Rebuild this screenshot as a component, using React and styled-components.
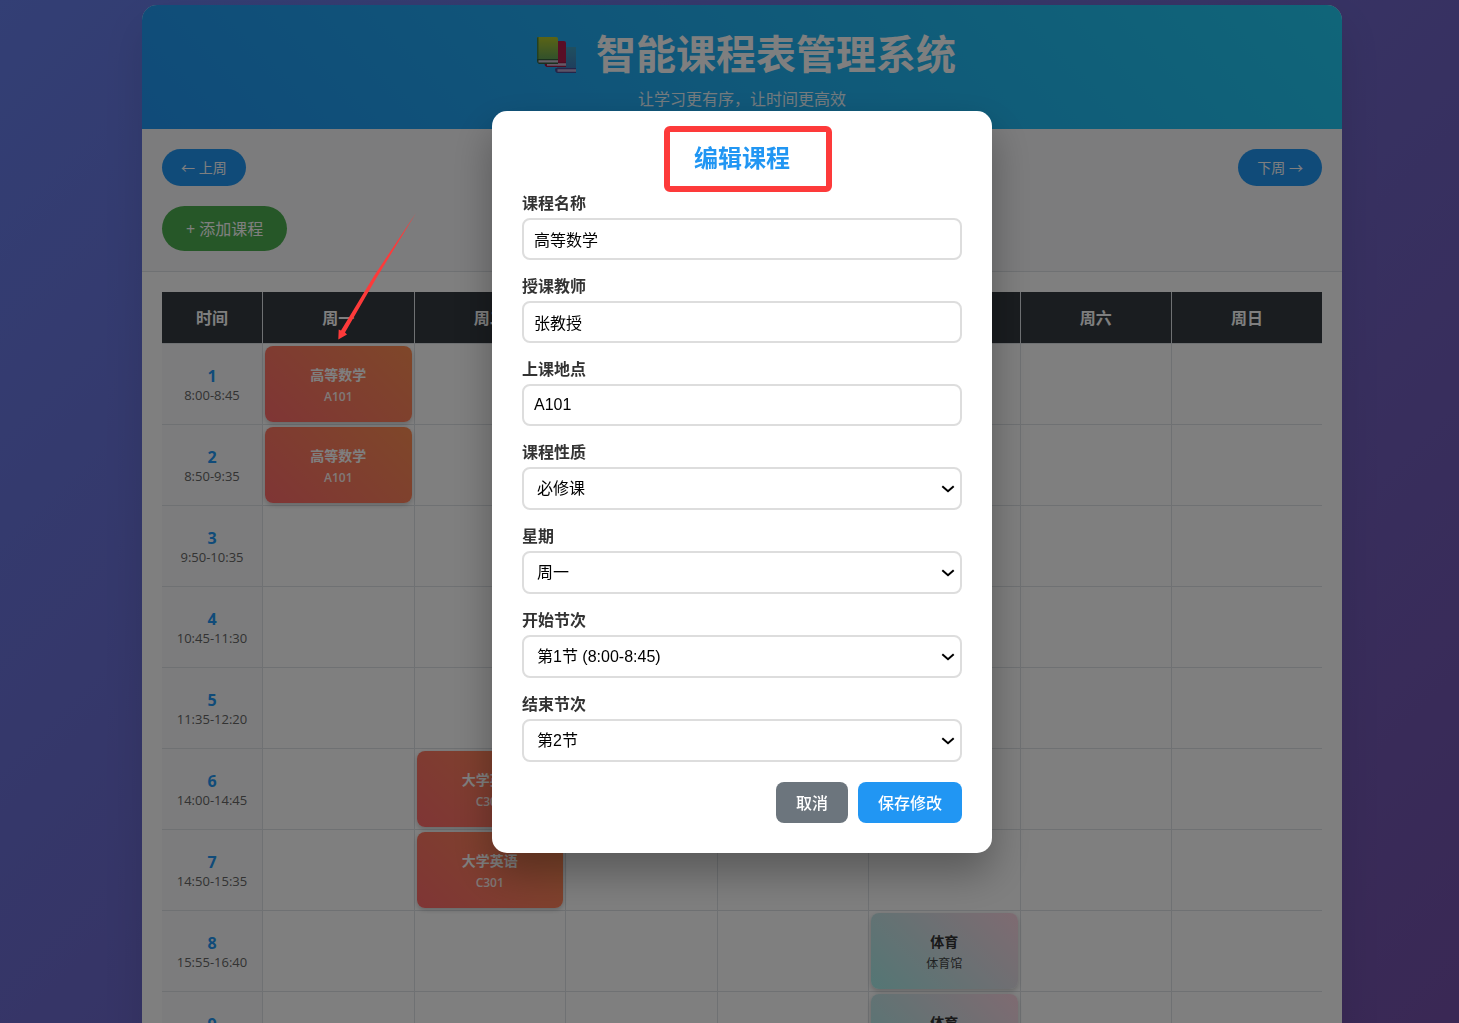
import React from 'react';
import styled, { createGlobalStyle } from 'styled-components';

const GlobalStyle = createGlobalStyle`
  * {
    box-sizing: border-box;
    margin: 0;
    padding: 0;
  }

  body {
    font-family: "Open Sans", "Noto Sans CJK SC", sans-serif;
    font-size: 16px;
    line-height: 23px;
    color: #333;
  }
`;

const Page = styled.div`
  height: 100vh;
  overflow: hidden;
  padding: 5px 0 0 25px;
  background: linear-gradient(135deg, #667eea 0%, #764ba2 100%) no-repeat;
  background-size: 100% 130vh;
`;

const Container = styled.div`
  max-width: 1200px;
  margin: 0 auto;
  background: #fff;
  border-radius: 15px;
  box-shadow: 0 20px 40px rgba(0, 0, 0, 0.1);
  overflow: hidden;
`;

const Header = styled.header`
  padding: 20px 20px 18px;
  text-align: center;
  color: #fff;
  background: linear-gradient(45deg, #2196f3, #21cbf3);

  h1 {
    display: flex;
    justify-content: center;
    align-items: center;
    gap: 12px;
    margin-bottom: 6px;
    font-size: 40px;
    line-height: 57px;
  }

  p {
    opacity: 0.9;
  }
`;

const Controls = styled.div`
  padding: 20px;
  background: #f8f9fa;
  border-bottom: 1px solid #dee2e6;
`;

const WeekNav = styled.div`
  display: flex;
  justify-content: space-between;
  margin-bottom: 20px;
`;

const PillButton = styled.button`
  display: block;
  border: none;
  border-radius: 25px;
  padding: ${({ $large }) => ($large ? '12px 24px 10px' : '10px 19px')};
  font-family: inherit;
  font-size: ${({ $large }) => ($large ? '16px' : '14px')};
  line-height: ${({ $large }) => ($large ? '23px' : '17px')};
  color: #fff;
  background: ${({ $large }) => ($large ? '#4caf50' : '#2196f3')};
  cursor: pointer;
`;

const TableWrap = styled.div`
  padding: 20px;
`;

const Timetable = styled.table`
  width: 100%;
  table-layout: fixed;
  border-collapse: separate;
  border-spacing: 0;
  text-align: center;

  th,
  td {
    border-right: 1px solid #dee2e6;
    border-bottom: 1px solid #dee2e6;
  }

  th:last-child,
  td:last-child {
    border-right: none;
  }

  th {
    padding-top: 2px;
  }

  thead th {
    height: 52px;
    color: #fff;
    background: #343a40;
  }

  thead th:first-child {
    width: 101px;
  }

  thead th:last-child {
    width: 150px;
  }

  tbody th {
    font-weight: normal;
    background: #f8f9fa;
  }

  td {
    height: 81px;
    padding: 2px;
  }
`;

const Period = styled.div`
  font-weight: bold;
  line-height: 20px;
  color: #2196f3;
`;

const Time = styled.div`
  font-size: 13px;
  line-height: 18px;
  color: #666;
`;

const Course = styled.div`
  display: flex;
  flex-direction: column;
  justify-content: center;
  gap: 4px;
  height: 76px;
  padding-top: 3px;
  border-radius: 8px;
  color: ${({ $kind }) => ($kind === 'pe' ? '#333' : '#fff')};
  background: ${({ $kind }) =>
    $kind === 'pe'
      ? 'linear-gradient(45deg, #a8edea, #fed6e3)'
      : 'linear-gradient(45deg, #ff6b6b, #ff8e53)'};
  box-shadow: 0 2px 5px rgba(0, 0, 0, 0.2);
  cursor: pointer;

  strong {
    font-size: 14px;
    line-height: 19px;
  }

  span {
    font-size: 12px;
    font-weight: ${({ $kind }) => ($kind === 'pe' ? 'normal' : '600')};
    line-height: 18px;
    opacity: 0.9;
  }
`;

const Overlay = styled.div`
  position: fixed;
  inset: 0;
  display: flex;
  justify-content: center;
  align-items: center;
  padding: 0 0 59px 25px;
  background: rgba(0, 0, 0, 0.5);
`;

const Modal = styled.form`
  width: 500px;
  padding: 30px;
  border-radius: 15px;
  background: #fff;
  box-shadow: 0 20px 40px rgba(0, 0, 0, 0.3);
`;

const ModalTitle = styled.h3`
  position: relative;
  width: fit-content;
  margin: 0 auto 18px;
  font-size: 24px;
  line-height: 33px;
  color: #2196f3;
`;

const TitleMark = styled.span`
  position: absolute;
  top: -15px;
  left: -30px;
  width: 168px;
  height: 66px;
  border: 6px solid #fd3a3a;
  border-radius: 6px;
`;

const Field = styled.div`
  margin-bottom: 15px;

  label {
    display: block;
    margin-bottom: 3px;
    font-weight: bold;
  }

  input,
  select {
    display: block;
    width: 100%;
    height: 42px;
    padding: 10px;
    border: 2px solid #ddd;
    border-radius: 8px;
    font-family: "Liberation Sans", "Noto Sans CJK SC", sans-serif;
    font-size: 16px;
    color: #000;
    background: #fff;
  }

  select {
    height: 43px;
    padding: 0 30px 0 13px;
    appearance: none;
  }
`;

const SelectBox = styled.div`
  position: relative;

  svg {
    position: absolute;
    top: 18px;
    right: 7px;
    pointer-events: none;
  }
`;

const Actions = styled.div`
  display: flex;
  justify-content: flex-end;
  gap: 10px;
  margin-top: 20px;
`;

const ActionButton = styled.button`
  padding: 10px 20px 8px;
  border: none;
  border-radius: 8px;
  font-family: inherit;
  font-size: 16px;
  font-weight: 500;
  line-height: 23px;
  color: #fff;
  background: ${({ $primary }) => ($primary ? '#2196f3' : '#6c757d')};
  cursor: pointer;
`;

const Pointer = styled.svg`
  position: fixed;
  top: 210px;
  left: 330px;
`;

const days = ['周一', '周二', '周三', '周四', '周五', '周六', '周日'];

const periods = [
  '8:00-8:45',
  '8:50-9:35',
  '9:50-10:35',
  '10:45-11:30',
  '11:35-12:20',
  '14:00-14:45',
  '14:50-15:35',
  '15:55-16:40',
  '16:45-17:30',
];

const courses = [
  { name: '高等数学', room: 'A101', kind: 'required', day: 0, start: 0, end: 1 },
  { name: '大学英语', room: 'C301', kind: 'required', day: 1, start: 5, end: 6 },
  { name: '体育', room: '体育馆', kind: 'pe', day: 4, start: 7, end: 8 },
];

const fields = [
  { id: 'name', label: '课程名称', value: '高等数学' },
  { id: 'teacher', label: '授课教师', value: '张教授' },
  { id: 'room', label: '上课地点', value: 'A101' },
  { id: 'kind', label: '课程性质', options: ['必修课', '选修课'] },
  { id: 'day', label: '星期', options: days },
  { id: 'start', label: '开始节次', options: periods.map((time, i) => `第${i + 1}节 (${time})`) },
  { id: 'end', label: '结束节次', options: periods.slice(1).map((_, i) => `第${i + 2}节`) },
];

const findCourse = (day, period) =>
  courses.find((c) => c.day === day && period >= c.start && period <= c.end);

const Books = () => (
  <svg width="56" height="48" viewBox="0 0 56 48" aria-hidden="true">
    <defs>
      <linearGradient id="green" x1="0" y1="0" x2="0" y2="1">
        <stop offset="0" stopColor="#b5c82c" />
        <stop offset="1" stopColor="#5da05a" />
      </linearGradient>
      <linearGradient id="blue" x1="0" y1="0" x2="0" y2="1">
        <stop offset="0" stopColor="#3f9fc0" />
        <stop offset="1" stopColor="#3d78ba" />
      </linearGradient>
    </defs>
    <path d="M29 17h19v25H29z" fill="url(#blue)" />
    <path d="M29 39h19v3H29z" fill="#b9a9cf" />
    <path d="M28 38h20v1.2H29.5v2.6H48V43H29q-2-1-2-3t1-2z" fill="#4b4a92" />
    <path d="M18 11h18q2 0 2 2v23H18z" fill="#b51d4d" />
    <path d="M18 33h20v3H18z" fill="#ccb0ce" />
    <path d="M18 32h20v1.2H19v2.6h19V37H18.500q-2-1-2-3t1.500-2z" fill="#9c1947" />
    <path d="M10 7h18q2 0 2 2v22H9V8q0-1 1-1z" fill="url(#green)" />
    <path d="M9 8q0-1 1.500-1V30H9z" fill="#4b8040" />
    <path d="M10 30h20v3H10z" fill="#cabfd2" />
    <path d="M9 29h21v1.200H10.500v2.300H30V34H11q-2-1-2-3z" fill="#35603d" />
  </svg>
);

const Chevron = () => (
  <svg width="14" height="8" viewBox="0 0 14 8" aria-hidden="true">
    <path d="M1.300 1.200L7 6.200l5.700-5" fill="none" stroke="#000" strokeWidth="2" />
  </svg>
);

const FormField = ({ id, label, value, options }) => (
  <Field>
    <label htmlFor={id}>{label}</label>
    {options ? (
      <SelectBox>
        <select id={id} defaultValue={options[0]}>
          {options.map((option) => (
            <option key={option}>{option}</option>
          ))}
        </select>
        <Chevron />
      </SelectBox>
    ) : (
      <input id={id} type="text" defaultValue={value} />
    )}
  </Field>
);

const EditModal = () => (
  <Overlay>
    <Modal role="dialog" aria-labelledby="modal-title" onSubmit={(e) => e.preventDefault()}>
      <ModalTitle id="modal-title">
        编辑课程
        <TitleMark />
      </ModalTitle>
      {fields.map((field) => (
        <FormField key={field.id} {...field} />
      ))}
      <Actions>
        <ActionButton type="button">取消</ActionButton>
        <ActionButton type="submit" $primary>保存修改</ActionButton>
      </Actions>
    </Modal>
    <Pointer width="90" height="135" viewBox="0 0 90 135" aria-hidden="true">
      <path d="M86 3L47 67L15 122.500l2 2L8.300 129.500l.4-10 2.300 1L44 66z" fill="#fd3a3a" />
    </Pointer>
  </Overlay>
);

const App = () => {
  return (
    <>
      <GlobalStyle />
      <Page>
        <Container>
          <Header>
            <h1>
              <Books />
              智能课程表管理系统
            </h1>
            <p>让学习更有序，让时间更高效</p>
          </Header>
          <Controls>
            <WeekNav>
              <PillButton type="button">← 上周</PillButton>
              <PillButton type="button">下周 →</PillButton>
            </WeekNav>
            <PillButton type="button" $large>+ 添加课程</PillButton>
          </Controls>
          <TableWrap>
            <Timetable>
              <thead>
                <tr>
                  <th scope="col">时间</th>
                  {days.map((day) => (
                    <th key={day} scope="col">{day}</th>
                  ))}
                </tr>
              </thead>
              <tbody>
                {periods.map((time, period) => (
                  <tr key={time}>
                    <th scope="row">
                      <Period>{period + 1}</Period>
                      <Time>{time}</Time>
                    </th>
                    {days.map((day, i) => {
                      const course = findCourse(i, period);
                      return (
                        <td key={day}>
                          {course && (
                            <Course $kind={course.kind}>
                              <strong>{course.name}</strong>
                              <span>{course.room}</span>
                            </Course>
                          )}
                        </td>
                      );
                    })}
                  </tr>
                ))}
              </tbody>
            </Timetable>
          </TableWrap>
        </Container>
      </Page>
      <EditModal />
    </>
  );
};

export default App;
